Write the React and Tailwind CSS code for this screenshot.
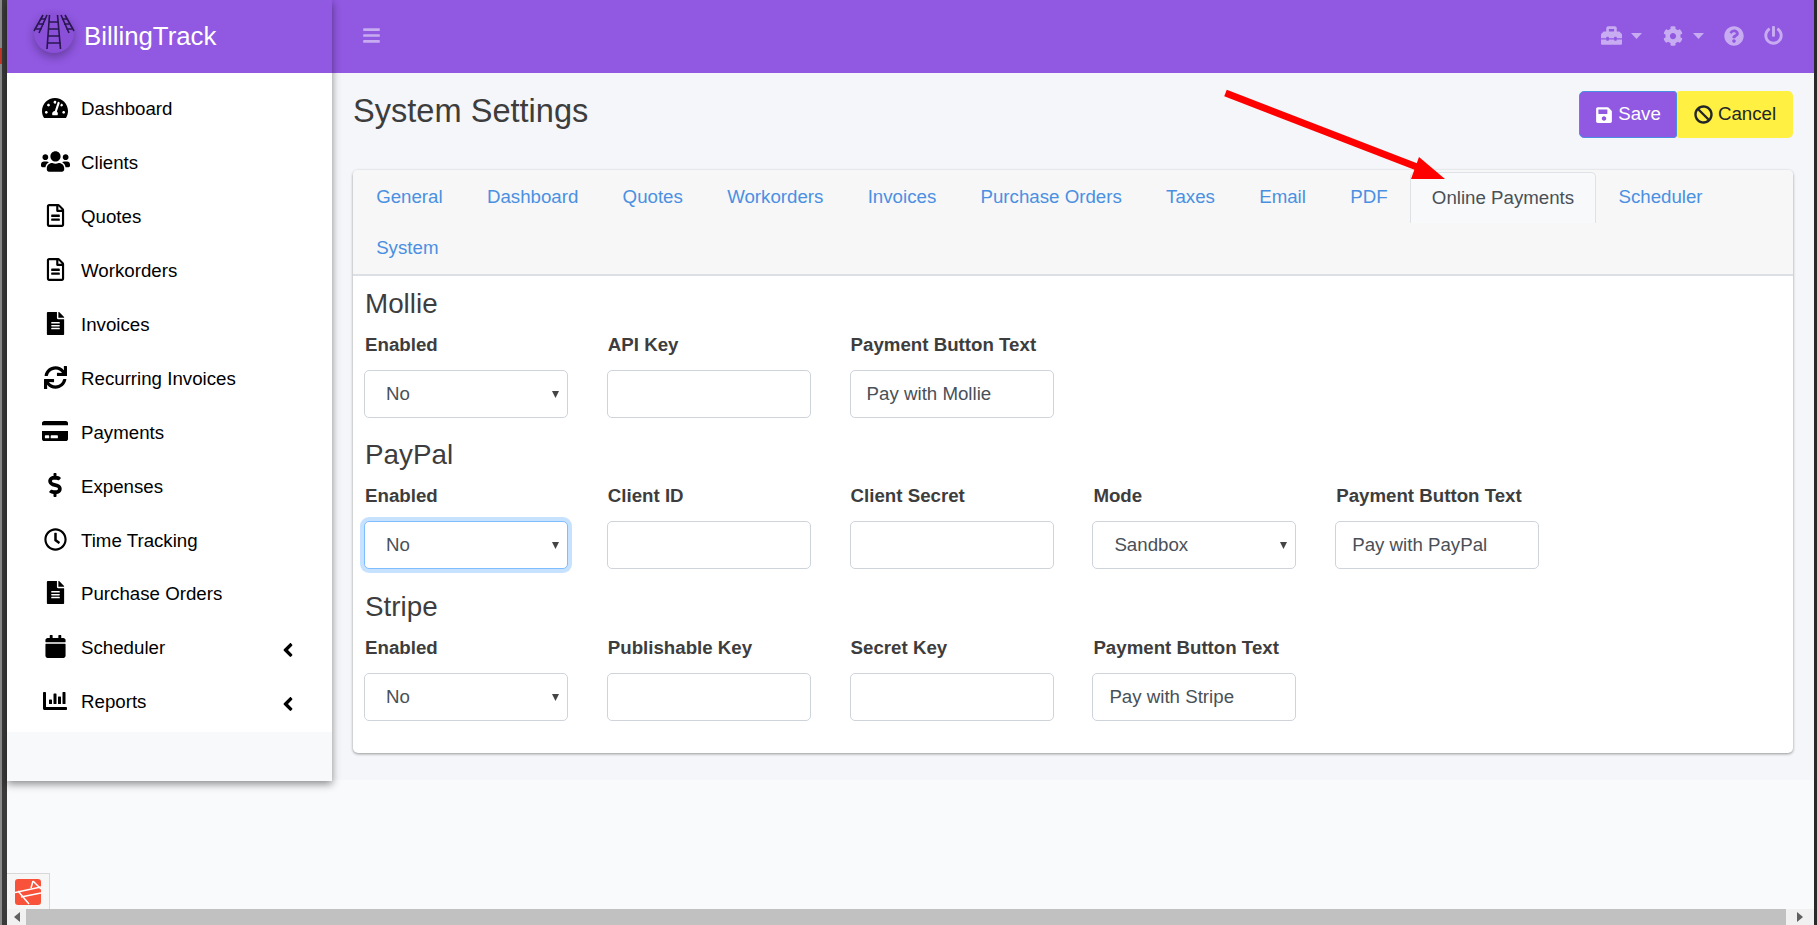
import {
  FaTachometerAlt, FaUsers, FaRegFileAlt, FaFileAlt, FaSync, FaCreditCard, FaDollarSign,
  FaRegClock, FaCalendar, FaChartBar, FaAngleLeft, FaBars, FaToolbox, FaCog,
  FaQuestionCircle, FaPowerOff, FaSave, FaBan
} from 'react-icons/fa';

const NAV = [
  { label: 'Dashboard', icon: FaTachometerAlt, size: 26 },
  { label: 'Clients', icon: FaUsers, size: 29 },
  { label: 'Quotes', icon: FaRegFileAlt, size: 23 },
  { label: 'Workorders', icon: FaRegFileAlt, size: 23 },
  { label: 'Invoices', icon: FaFileAlt, size: 23 },
  { label: 'Recurring Invoices', icon: FaSync, size: 23 },
  { label: 'Payments', icon: FaCreditCard, size: 26 },
  { label: 'Expenses', icon: FaDollarSign, size: 24 },
  { label: 'Time Tracking', icon: FaRegClock, size: 23 },
  { label: 'Purchase Orders', icon: FaFileAlt, size: 23 },
  { label: 'Scheduler', icon: FaCalendar, size: 23, more: true },
  { label: 'Reports', icon: FaChartBar, size: 24, more: true },
];

const TABS = ['General', 'Dashboard', 'Quotes', 'Workorders', 'Invoices', 'Purchase Orders', 'Taxes', 'Email', 'PDF', 'Online Payments', 'Scheduler', 'System'];

const SECTIONS = [
  {
    title: 'Mollie',
    fields: [
      { label: 'Enabled', select: 'No' },
      { label: 'API Key', value: '' },
      { label: 'Payment Button Text', value: 'Pay with Mollie' },
    ],
  },
  {
    title: 'PayPal',
    fields: [
      { label: 'Enabled', select: 'No', focus: true },
      { label: 'Client ID', value: '' },
      { label: 'Client Secret', value: '' },
      { label: 'Mode', select: 'Sandbox' },
      { label: 'Payment Button Text', value: 'Pay with PayPal' },
    ],
  },
  {
    title: 'Stripe',
    fields: [
      { label: 'Enabled', select: 'No' },
      { label: 'Publishable Key', value: '' },
      { label: 'Secret Key', value: '' },
      { label: 'Payment Button Text', value: 'Pay with Stripe' },
    ],
  },
];

const Logo = () => (
  <div className="relative w-[40px] h-[40px] rounded-full bg-[#8a50d8] shadow-[0_4px_10px_rgba(0,0,0,0.3)] mt-[-8px]">
    <svg className="absolute left-[-1px] top-0" width="42" height="38" viewBox="0 0 42 38" fill="none" stroke="#2a1650" strokeWidth="1.6">
      <path d="M16.5 2 L14 36 M24.5 2 L27.5 36" />
      <path d="M16 9h9M15.5 16h10.5M15 23h11.5M14.5 30h13" />
      <path d="M10 2 L1 18 M14 2 L6 20" />
      <path d="M8 6h5M5.5 11h5.5M3 16h5.5" />
      <path d="M28 2 L36 20 M32 2 L41 18" />
      <path d="M29 6h5M31 11h5.5M33.5 16h5.5" />
    </svg>
  </div>
);

const Field = ({ field }) => (
  <div className="w-[204px] shrink-0">
    <div className="h-[24px] mt-[12px] pl-px leading-[24px] font-bold text-[#3d3d3d] whitespace-nowrap">{field.label}</div>
    {field.select ? (
      <div className={`relative mt-[13px] h-[48px] rounded-[5px] bg-white border flex items-center pl-[21px] text-[#495057] ${field.focus ? 'border-[#80bdff] shadow-[0_0_0_4px_rgba(0,123,255,0.22)]' : 'border-[#ced4da]'}`}>
        {field.select}
        <svg className="absolute right-[8px] top-[20px]" width="7" height="7" viewBox="0 0 7 7">
          <path d="M0 0h7L3.5 7z" fill="#444" />
        </svg>
      </div>
    ) : (
      <input
        readOnly
        value={field.value}
        className="block w-full mt-[13px] h-[48px] rounded-[5px] bg-white border border-[#ced4da] px-[16px] text-[#495057] outline-none"
      />
    )}
  </div>
);

export default function App() {
  return (
    <div className="relative flex h-[925px] w-[1817px] overflow-hidden font-['Liberation_Sans',Arial,sans-serif] text-[18.7px] bg-[#f9fafc]">
      {/* window edge */}
      <div className="w-[2px] bg-[#8a8a8a]">
        <div className="mt-[48px] h-[16px] bg-[#c0392b]" />
      </div>
      <div className="w-[5px] bg-[#3a3a3a]" />

      <div className="flex-1 flex flex-col min-w-0">
        <div className="flex h-[781px]">
          {/* Sidebar */}
          <aside className="relative z-10 w-[325px] shrink-0 flex flex-col bg-[#f8f9fa] shadow-[0_3px_8px_rgba(0,0,0,0.45)]">
            <div className="h-[73px] bg-[#9158e2] flex items-center pl-[27px] gap-[10px]">
              <Logo />
              <span className="text-[25.8px] text-white">BillingTrack</span>
            </div>
            <nav className="bg-white h-[659px] pt-[9.5px]">
              {NAV.map(({ label, icon: Icon, size, more }) => (
                <div key={label} className="h-[53.9px] flex items-center pl-[32px] text-black">
                  <div className="w-[32px] flex justify-center mb-[3px]">
                    <Icon size={size} />
                  </div>
                  <span className="ml-[10px] flex-1">{label}</span>
                  {more && <FaAngleLeft size={22} className="mr-[33px] mt-[3px]" />}
                </div>
              ))}
            </nav>
          </aside>

          {/* Main */}
          <div className="flex-1 h-[780px] flex flex-col min-w-0 bg-[#f4f6f9]">
            <header className="h-[73px] bg-[#9158e2] flex items-center justify-between pl-[30px] pr-[31px] pb-[2px] text-white/50">
              <FaBars size={19} />
              <div className="flex items-center">
                <FaToolbox size={21} />
                <svg className="ml-[9px]" width="11" height="6" viewBox="0 0 11 6"><path d="M0 0h11L5.5 6z" fill="currentColor" /></svg>
                <FaCog size={20} className="ml-[21px]" />
                <svg className="ml-[10px]" width="11" height="6" viewBox="0 0 11 6"><path d="M0 0h11L5.5 6z" fill="currentColor" /></svg>
                <FaQuestionCircle size={20} className="ml-[20px]" />
                <FaPowerOff size={19} className="ml-[20px]" />
              </div>
            </header>

            <div className="px-[21px] pt-[18px]">
              <div className="flex justify-between h-[47px]">
                <h1 className="text-[32.6px] leading-[40px] text-[#3d3d3d]">System Settings</h1>
                <div className="flex">
                  <button className="w-[98px] rounded-l-[5px] rounded-r-[3px] bg-[#9158e2] border border-[#4a90e2] text-white flex items-center justify-center gap-[5px]">
                    <FaSave size={18} /> Save
                  </button>
                  <button className="w-[116px] rounded-r-[5px] rounded-l-[3px] bg-[#fff042] text-[#212529] flex items-center justify-center gap-[5px]">
                    <FaBan size={19} /> Cancel
                  </button>
                </div>
              </div>

              {/* Card */}
              <div className="mt-[32px] h-[583px] bg-white rounded-[5px] shadow-[0_1px_3px_rgba(0,0,0,0.4)] overflow-hidden">
                <div className="bg-[#f7f7f7] border-b-2 border-[#dcdfe4] h-[106px] pt-[2px] pl-px flex flex-wrap content-start">
                  {TABS.map((tab) => (
                    <div
                      key={tab}
                      className={tab === 'Online Payments'
                        ? 'h-[51px] px-[21.15px] flex items-center border border-b-0 border-[#dee2e6] rounded-t-[5px] bg-[#f8f9fa] text-[#495057]'
                        : 'h-[51px] px-[21.15px] flex items-center border border-transparent text-[#4a90e2]'}
                    >
                      {tab}
                    </div>
                  ))}
                </div>

                <div className="px-[11px] pt-[10.75px] flex flex-col gap-[20.5px]">
                  {SECTIONS.map((section) => (
                    <section key={section.title}>
                      <h3 className="h-[34px] pl-px text-[27.8px] leading-[34px] text-[#3d3d3d]">{section.title}</h3>
                      <div className="flex gap-[38.8px]">
                        {section.fields.map((field) => (
                          <Field key={field.label} field={field} />
                        ))}
                      </div>
                    </section>
                  ))}
                </div>
              </div>
            </div>
          </div>
        </div>

        {/* Below page + debugbar */}
        <div className="flex-1 flex items-end">
          <div className="w-[43px] h-[36px] bg-[#f6f6f6] border-t border-r border-[#d8d8d8] flex items-center justify-center">
            <svg width="26" height="26" viewBox="0 0 26 26">
              <rect width="26" height="26" rx="3" fill="#f9523a" />
              <path d="M0 13.5 L26 8 M3 12 L14 25 M18 2 L26 10 M18 2 L16 9 M6 18 L26 14" stroke="#fff" strokeWidth="1.5" fill="none" />
            </svg>
          </div>
        </div>

        {/* Horizontal scrollbar */}
        <div className="h-[16px] bg-[#f1f1f1] flex items-center">
          <div className="w-[19px] flex justify-center">
            <svg width="6" height="10" viewBox="0 0 6 10"><path d="M6 0v10L0 5z" fill="#606060" /></svg>
          </div>
          <div className="flex-1 h-full bg-[#c1c1c1]" />
          <div className="w-[28px] flex justify-center">
            <svg width="6" height="10" viewBox="0 0 6 10"><path d="M0 0v10l6-5z" fill="#606060" /></svg>
          </div>
        </div>
      </div>

      <div className="w-[3px] bg-[#2a2a2a]" />

      {/* Red annotation arrow */}
      <svg className="absolute left-0 top-0 pointer-events-none" width="1817" height="925" fill="none">
        <path d="M1225.5 93 L1417 167" stroke="#ff0000" strokeWidth="7" />
        <path d="M1419 157 L1411 179 L1445 179 Z" fill="#ff0000" />
      </svg>
    </div>
  );
}
